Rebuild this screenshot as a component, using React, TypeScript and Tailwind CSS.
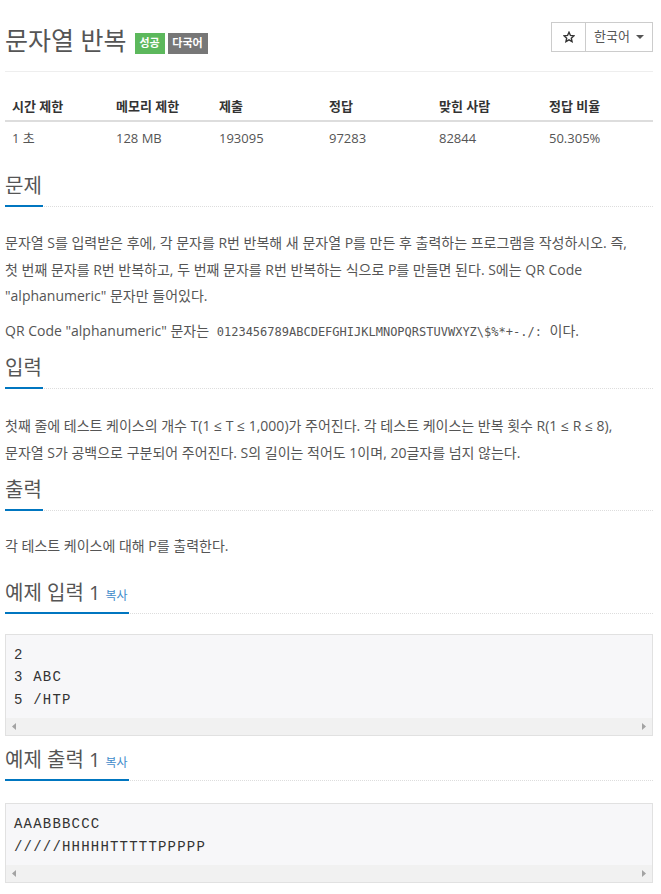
import React from 'react';

const font = 'font-["Open_Sans","Noto_Sans_CJK_KR",sans-serif]';
const mono = 'font-["DejaVu_Sans_Mono","Noto_Sans_CJK_KR",monospace]';
const preFont = 'font-["Liberation_Mono","DejaVu_Sans_Mono",monospace]';

const stats = [
  { label: '시간 제한', value: '1 초', w: 'w-[104px]' },
  { label: '메모리 제한', value: '128 MB', w: 'w-[103px]' },
  { label: '제출', value: '193095', w: 'w-[110px]' },
  { label: '정답', value: '97283', w: 'w-[110px]' },
  { label: '맞힌 사람', value: '82844', w: 'w-[110px]' },
  { label: '정답 비율', value: '50.305%', w: 'w-[111px]' },
];

const Headline: React.FC<{ title: string; copy?: boolean; className?: string }> = ({ title, copy, className }) => (
  <h2 className={`flex border-b border-dotted border-[#dddddd] ${className ?? ''}`}>
    <span className="-mb-[1px] flex items-baseline border-b-2 border-[#0076c0] pb-[4px] pr-[1px]">
      <span className="text-[20px] leading-[30px] text-[#555555]">{title}</span>
      {copy && <span className="ml-[5px] text-[12px] text-[#428bca]">복사</span>}
    </span>
  </h2>
);

const Arrow: React.FC<{ dir: 'left' | 'right' }> = ({ dir }) => (
  <svg width="4" height="7" viewBox="0 0 4 7">
    {dir === 'left' ? <path d="M4 0 L0 3.5 L4 7 Z" fill="#a3a3a3" /> : <path d="M0 0 L4 3.5 L0 7 Z" fill="#a3a3a3" />}
  </svg>
);

const SampleBox: React.FC<{ lines: string[]; className?: string }> = ({ lines, className }) => (
  <div className={`border border-[#e1e1e1] bg-[#f7f7f9] ${className ?? ''}`}>
    <div className={`px-[8px] pb-[7px] pt-[9px] ${preFont} text-[14px] leading-[22.5px] tracking-[1.2px] text-[#333333]`}>
      {lines.map((l, i) => (
        <div key={i} className="whitespace-pre">{l}</div>
      ))}
    </div>
    <div className="flex h-[17px] items-center justify-between bg-[#f1f1f1] px-[6px]">
      <Arrow dir="left" />
      <Arrow dir="right" />
    </div>
  </div>
);

export default function App() {
  return (
    <div className={`min-h-[894px] w-[661px] bg-white pl-[5px] pr-[8px] ${font} text-[14px] text-[#555555]`}>
      {/* title row */}
      <div className="flex items-start justify-between pt-[22px]">
        <h1 className="flex h-[36px] items-center">
          <span className="text-[25px] leading-[36px] text-[#555555]">문자열 반복</span>
          <span className="ml-[8px] mt-[7px] flex h-[21px] w-[30px] items-center justify-center bg-[#5cb85c] text-[11px] font-bold text-white">
            성공
          </span>
          <span className="ml-[3px] mt-[7px] flex h-[21px] w-[40px] items-center justify-center bg-[#777777] text-[11px] font-bold text-white">
            다국어
          </span>
        </h1>
        <div className="flex h-[30px] shrink-0">
          <button className="flex w-[35px] shrink-0 items-center justify-center border border-[#cccccc] bg-white">
            <svg width="12" height="12" viewBox="0 0 24 24">
              <path
                d="M12 2.5 L14.9 8.9 L21.8 9.6 L16.6 14.3 L18.1 21.2 L12 17.6 L5.9 21.2 L7.4 14.3 L2.2 9.6 L9.1 8.9 Z"
                fill="none"
                stroke="#333333"
                strokeWidth="2.8"
                strokeLinejoin="miter"
              />
            </svg>
          </button>
          <button className="-ml-[1px] flex w-[68px] shrink-0 items-center whitespace-nowrap border border-[#cccccc] bg-white pl-[8px] text-[13px] text-[#555555]">
            <span>한국어</span>
            <span className="ml-[6px] h-0 w-0 border-x-[4px] border-t-[4px] border-x-transparent border-t-[#555555]" />
          </button>
        </div>
      </div>

      <div className="mt-[13px] border-t border-[#eeeeee]" />

      {/* stats table */}
      <div className="mt-[20px] text-[13px]">
        <div className="flex h-[30px] border-b-2 border-[#dddddd]">
          {stats.map((s) => (
            <div key={s.label} className={`${s.w} px-[7px] pt-[4px] leading-[20px] font-bold text-[#333333]`}>
              {s.label}
            </div>
          ))}
        </div>
        <div className="flex h-[32px]">
          {stats.map((s) => (
            <div key={s.label} className={`${s.w} px-[7px] pt-[6px] leading-[20px]`}>
              {s.value}
            </div>
          ))}
        </div>
      </div>

      {/* 문제 */}
      <Headline title="문제" className="mt-[17px]" />
      <div className="mt-[23px] leading-[26.5px]">
        <p>
          문자열 S를 입력받은 후에, 각 문자를 R번 반복해 새 문자열 P를 만든 후 출력하는 프로그램을 작성하시오. 즉,
          <br />
          첫 번째 문자를 R번 반복하고, 두 번째 문자를 R번 반복하는 식으로 P를 만들면 된다. S에는 QR Code
          <br />
          "alphanumeric" 문자만 들어있다.
        </p>
        <p className="mt-[8px]">
          QR Code "alphanumeric" 문자는{' '}
          <code className={`${mono} px-[4px] text-[12px]`}>0123456789ABCDEFGHIJKLMNOPQRSTUVWXYZ\$%*+-./:</code> 이다.
        </p>
      </div>

      {/* 입력 */}
      <Headline title="입력" className="mt-[8px]" />
      <p className="mt-[24px] leading-[26.5px]">
        첫째 줄에 테스트 케이스의 개수 T(1 ≤ T ≤ 1,000)가 주어진다. 각 테스트 케이스는 반복 횟수 R(1 ≤ R ≤ 8),
        <br />
        문자열 S가 공백으로 구분되어 주어진다. S의 길이는 적어도 1이며, 20글자를 넘지 않는다.
      </p>

      {/* 출력 */}
      <Headline title="출력" className="mt-[9px]" />
      <p className="mt-[22px] leading-[26.5px]">각 테스트 케이스에 대해 P를 출력한다.</p>

      {/* 예제 입력 */}
      <Headline title="예제 입력 1" copy className="mt-[18px]" />
      <SampleBox lines={['2', '3 ABC', '5 /HTP']} className="mt-[20px]" />

      {/* 예제 출력 */}
      <Headline title="예제 출력 1" copy className="mt-[9px]" />
      <SampleBox lines={['AAABBBCCC', '/////HHHHHTTTTTPPPPP']} className="mt-[22px]" />
    </div>
  );
}
